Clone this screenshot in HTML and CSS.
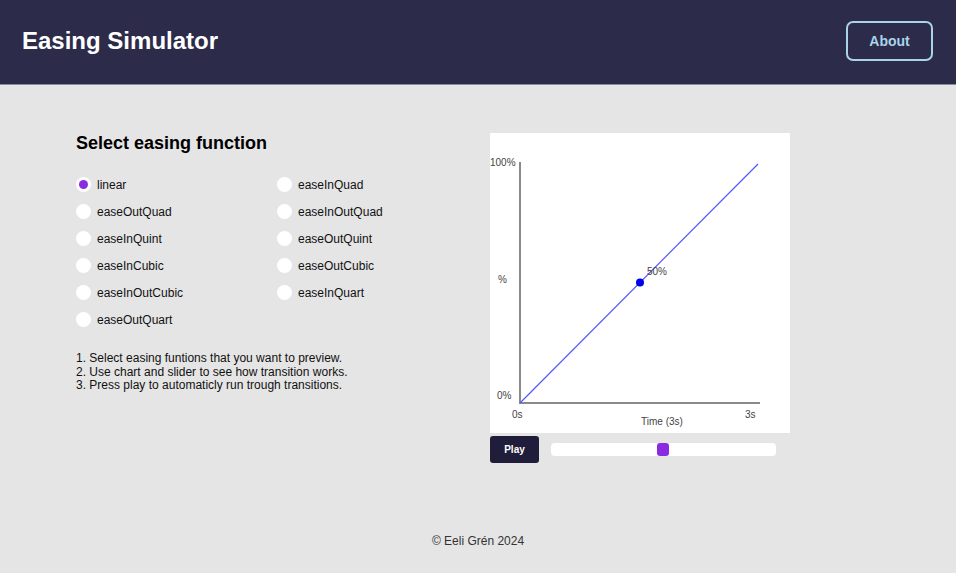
FILE: index.html
```html
<!DOCTYPE html>
<html lang="en">
<head>
<meta charset="utf-8">
<title>Easing Simulator</title>
<link rel="stylesheet" href="styles.css">
</head>
<body>
<header class="topbar">
  <h1 class="brand">Easing Simulator</h1>
  <button class="about-btn">About</button>
</header>
<main class="main">
  <section class="picker">
    <h2 class="picker-title">Select easing function</h2>
    <div class="options">
      <label class="opt"><span class="radio checked"></span>linear</label>
      <label class="opt"><span class="radio"></span>easeInQuad</label>
      <label class="opt"><span class="radio"></span>easeOutQuad</label>
      <label class="opt"><span class="radio"></span>easeInOutQuad</label>
      <label class="opt"><span class="radio"></span>easeInQuint</label>
      <label class="opt"><span class="radio"></span>easeOutQuint</label>
      <label class="opt"><span class="radio"></span>easeInCubic</label>
      <label class="opt"><span class="radio"></span>easeOutCubic</label>
      <label class="opt"><span class="radio"></span>easeInOutCubic</label>
      <label class="opt"><span class="radio"></span>easeInQuart</label>
      <label class="opt"><span class="radio"></span>easeOutQuart</label>
    </div>
    <ol class="steps">
      <li>1. Select easing funtions that you want to preview.</li>
      <li>2. Use chart and slider to see how transition works.</li>
      <li>3. Press play to automaticly run trough transitions.</li>
    </ol>
  </section>
  <section class="viz">
    <div class="chart">
      <svg width="300" height="300" viewBox="0 0 300 300">
        <line x1="30" y1="29" x2="30" y2="270" stroke="#8a8a8a" stroke-width="2"/>
        <line x1="29" y1="270" x2="270" y2="270" stroke="#8a8a8a" stroke-width="2"/>
        <line x1="30" y1="270" x2="268" y2="31" stroke="#5555ff" stroke-width="1.2"/>
        <circle cx="150" cy="149.5" r="4" fill="#0000ee"/>
        <text class="lbl" x="0" y="33">100%</text>
        <text class="lbl" x="8" y="150">%</text>
        <text class="lbl" x="7" y="266">0%</text>
        <text class="lbl" x="22" y="285">0s</text>
        <text class="lbl" x="255" y="285">3s</text>
        <text class="lbl mid" x="172" y="292">Time (3s)</text>
        <text class="lbl" x="157" y="142">50%</text>
      </svg>
    </div>
    <div class="controls">
      <button class="play">Play</button>
      <div class="slider"><span class="thumb"></span></div>
    </div>
  </section>
</main>
<footer class="footer">© Eeli Grén 2024</footer>
</body>
</html>
```
FILE: styles.css
```css
* { box-sizing: border-box; }
html, body { margin: 0; padding: 0; }
body {
  background: #e5e5e5;
  font-family: "Liberation Sans", Arial, sans-serif;
  color: #000;
  width: 956px;
  height: 573px;
  overflow: hidden;
}
.topbar {
  height: 85px;
  background: #2c2b4a;
  border-bottom: 1px solid #8c8b9b;
  display: flex;
  align-items: center;
  justify-content: space-between;
  padding: 0 23px 0 22px;
}
.brand {
  margin: 0;
  color: #fff;
  font-size: 24px;
  font-weight: bold;
  margin-top: -3px;
}
.about-btn {
  width: 87px;
  height: 40px;
  background: transparent;
  border: 2px solid #a9d3e9;
  border-radius: 7px;
  color: #a9d3e9;
  font-family: "Liberation Sans", Arial, sans-serif;
  font-weight: bold;
  font-size: 14px;
  padding: 0 0 1px;
  margin-top: -2px;
}
.main {
  display: flex;
  padding: 48px 0 0 76px;
  height: 418px;
}
.picker { width: 414px; }
.picker-title {
  margin: 0;
  font-size: 18px;
  font-weight: bold;
  line-height: 20px;
}
.options {
  display: grid;
  grid-template-columns: 201px 150px;
  grid-auto-rows: 27px;
  margin-top: 18px;
}
.opt {
  display: flex;
  align-items: center;
  font-size: 12px;
  height: 27px;
  color: #111;
}
.radio {
  width: 15px;
  height: 15px;
  border-radius: 50%;
  background: #fff;
  margin-right: 6px;
  position: relative;
}
.radio.checked::after {
  content: "";
  position: absolute;
  left: 3px;
  top: 3px;
  width: 9px;
  height: 9px;
  border-radius: 50%;
  background: #8a2be2;
}
.steps {
  list-style: none;
  margin: 19px 0 0;
  padding: 0;
  font-size: 12px;
  line-height: 13.5px;
  color: #111;
}
.viz { width: 300px; }
.chart {
  width: 300px;
  height: 300px;
  background: #fff;
}
.chart svg { display: block; }
.lbl {
  font-family: "Liberation Sans", Arial, sans-serif;
  font-size: 10px;
  fill: #444;
}
.lbl.mid { text-anchor: middle; }
.controls {
  display: flex;
  align-items: center;
  margin-top: 3px;
}
.play {
  width: 49px;
  height: 27px;
  background: #1f1d39;
  color: #fff;
  border: none;
  border-radius: 3px;
  font-family: "Liberation Sans", Arial, sans-serif;
  font-weight: bold;
  font-size: 10px;
  padding: 0;
}
.slider {
  margin-left: 12px;
  width: 225px;
  height: 13px;
  background: #fff;
  border-radius: 4px;
  position: relative;
}
.thumb {
  position: absolute;
  left: 106px;
  top: 0;
  width: 12px;
  height: 13px;
  border-radius: 3px;
  background: #8a2be2;
}
.footer {
  text-align: center;
  font-size: 12px;
  color: #333;
  margin-top: 31px;
}
```
